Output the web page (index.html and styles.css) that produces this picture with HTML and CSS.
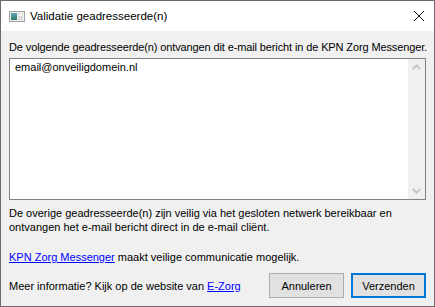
FILE: index.html
```html
<!DOCTYPE html>
<html lang="nl">
<head>
    <meta charset="UTF-8">
    <title>Validatie geadresseerde(n)</title>
    <link rel="stylesheet" href="styles.css">
</head>
<body>
    <div class="window">
        <div class="titlebar">
            <svg class="app-icon" width="16" height="11" viewBox="0 0 16 11">
                <defs>
                    <linearGradient id="pane" x1="0" y1="0" x2="0" y2="1">
                        <stop offset="0" stop-color="#5fa7c9"/>
                        <stop offset="1" stop-color="#2f7a5e"/>
                    </linearGradient>
                </defs>
                <rect x="0.5" y="0.5" width="15" height="10" fill="#f2f2f2" stroke="#a0a0a0"/>
                <rect x="2" y="2" width="6" height="7" fill="url(#pane)"/>
                <rect x="9" y="2" width="5" height="7" fill="#dcdcdc"/>
                <rect x="10" y="3" width="3" height="2" fill="#fafafa"/>
            </svg>
            <span class="title">Validatie geadresseerde(n)</span>
            <svg class="close" width="10" height="10" viewBox="0 0 10 10">
                <path d="M0 0 L10 10 M10 0 L0 10" stroke="#111" stroke-width="1"/>
            </svg>
        </div>
        <div class="content">
            <p class="intro">De volgende geadresseerde(n) ontvangen dit e-mail bericht in de KPN Zorg Messenger.</p>
            <div class="listbox">
                <div class="items">
                    <div class="item">email@onveiligdomein.nl</div>
                </div>
                <div class="scrollbar">
                    <svg width="9" height="6" viewBox="0 0 9 6"><path d="M0.8 5 L4.5 1.3 L8.2 5" fill="none" stroke="#c4c4c4" stroke-width="1.8"/></svg>
                    <svg width="9" height="6" viewBox="0 0 9 6"><path d="M0.8 1 L4.5 4.7 L8.2 1" fill="none" stroke="#c4c4c4" stroke-width="1.8"/></svg>
                </div>
            </div>
            <p class="info">De overige geadresseerde(n) zijn veilig via het gesloten netwerk bereikbaar en<br>ontvangen het e-mail bericht direct in de e-mail cliënt.</p>
            <p class="promo"><a href="#">KPN Zorg Messenger</a> maakt veilige communicatie mogelijk.</p>
            <div class="footer">
                <span class="more">Meer informatie? Kijk op de website van <a href="#">E-Zorg</a></span>
                <div class="buttons">
                    <button class="btn">Annuleren</button>
                    <button class="btn default">Verzenden</button>
                </div>
            </div>
        </div>
    </div>
</body>
</html>
```

FILE: styles.css
```css
body {
    margin: 0;
    font-family: 'Liberation Sans', Arial, sans-serif;
    font-size: 11px;
    color: #000;
}

.window {
    width: 435px;
    height: 307px;
    box-sizing: border-box;
    border: 1px solid #6b6b6b;
    background-color: #f0f0f0;
    display: flex;
    flex-direction: column;
}

.titlebar {
    height: 30px;
    flex-shrink: 0;
    background-color: #fff;
    display: flex;
    align-items: center;
    padding-left: 8px;
}

.app-icon {
    margin-right: 5px;
}

.title {
    flex: 1;
    font-size: 11.5px;
}

.close {
    margin-right: 10px;
}

.content {
    flex: 1;
    padding: 9px 8px 0 8px;
    display: flex;
    flex-direction: column;
}

p {
    margin: 0;
    line-height: 14px;
    white-space: nowrap;
}

.intro {
    margin-bottom: 4px;
    letter-spacing: -0.12px;
}

.listbox {
    height: 142px;
    flex-shrink: 0;
    box-sizing: border-box;
    border: 1px solid #828282;
    background-color: #fff;
    display: flex;
}

.items {
    flex: 1;
    padding: 1px 5px;
}

.item {
    line-height: 14px;
}

.scrollbar {
    width: 17px;
    background-color: #f0f0f0;
    display: flex;
    flex-direction: column;
    justify-content: space-between;
    align-items: center;
    padding: 5px 0;
}

.info {
    margin-top: 6px;
}

.promo {
    margin-top: 16px;
}

a {
    color: #0000ff;
}

.footer {
    display: flex;
    justify-content: space-between;
    align-items: center;
    margin-top: 9px;
}

.buttons {
    display: flex;
    gap: 7px;
}

.btn {
    width: 75px;
    height: 25px;
    font-family: inherit;
    font-size: 11px;
    color: #000;
    background-color: #e1e1e1;
    border: 1px solid #adadad;
    padding: 0;
}

.btn.default {
    border: 2px solid #0078d7;
}
```
